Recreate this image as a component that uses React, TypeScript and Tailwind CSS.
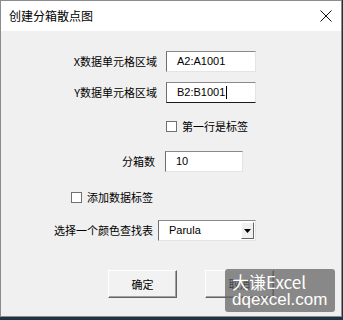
const cjk = { fontFamily: '"Noto Sans CJK SC", "Liberation Sans", sans-serif' };

const Checkbox = () => (
  <span className="w-[11px] h-[11px] bg-white border border-[#707070] shrink-0" />
);

const Field = ({ value, width, caret }: { value: string; width: string; caret?: boolean }) => (
  <div
    className={`${width} h-[21px] bg-white border-t border-l border-t-[#8a8a8a] border-l-[#6e6e6e] border-r border-b border-r-[#e4e4e4] ${
      caret ? "border-b-[#1a1a1a]" : "border-b-[#e4e4e4]"
    } flex items-center pl-[10px] text-[11px] text-black`}
    style={{ fontFamily: '"Liberation Sans", sans-serif' }}
  >
    {value}
    {caret && <span className="w-px h-[13px] bg-black ml-px" />}
  </div>
);

const Button = ({ label }: { label: string }) => (
  <div className="w-[69px] h-[28px] bg-[#f2f2f2] border border-t-white border-l-white border-b-[#646464] border-r-[#646464] shadow-[inset_-1px_-1px_0_#a0a0a0] flex items-center justify-center text-[11px] text-black">
    {label}
  </div>
);

export default function App() {
  return (
    <div className="w-[343px] h-[320px] bg-[#1d3440] relative overflow-hidden" style={cjk}>
      <div className="w-[342px] h-[317px] bg-[#f0f0f0] border border-[#8c8c8c] flex flex-col">
        {/* title bar */}
        <div className="h-[30px] bg-white flex items-center justify-between pl-[8px] pr-[9px]">
          <span className="text-[12px] text-black">创建分箱散点图</span>
          <svg width="12" height="12" viewBox="0 0 12 12">
            <path d="M0.5 0.5 L11.5 11.5 M11.5 0.5 L0.5 11.5" stroke="#111" strokeWidth="1" />
          </svg>
        </div>

        <div className="flex flex-col text-[11px] text-black">
          <div className="flex items-center mt-[20px]">
            <span className="w-[156px] text-right">X数据单元格区域</span>
            <div className="ml-[9px]">
              <Field value="A2:A1001" width="w-[90px]" />
            </div>
          </div>

          <div className="flex items-center mt-[10px]">
            <span className="w-[156px] text-right">Y数据单元格区域</span>
            <div className="ml-[9px]">
              <Field value="B2:B1001" width="w-[90px]" caret />
            </div>
          </div>

          <div className="flex items-center mt-[16px] pl-[165px] gap-[5px] h-[14px]">
            <Checkbox />
            <span>第一行是标签</span>
          </div>

          <div className="flex items-center mt-[18px]">
            <span className="w-[154px] text-right">分箱数</span>
            <div className="ml-[10px]">
              <Field value="10" width="w-[78px]" />
            </div>
          </div>

          <div className="flex items-center mt-[18px] pl-[70px] gap-[5px] h-[14px]">
            <Checkbox />
            <span>添加数据标签</span>
          </div>

          <div className="flex items-center mt-[16px]">
            <span className="w-[152px] text-right">选择一个颜色查找表</span>
            <div className="ml-[5px] w-[98px] h-[21px] bg-white border border-t-[#8a8a8a] border-l-[#6e6e6e] border-r-[#e4e4e4] border-b-[#e4e4e4] flex items-center justify-between pl-[10px] pr-px">
              <span style={{ fontFamily: '"Liberation Sans", sans-serif' }}>Parula</span>
              <div className="w-[13px] h-[17px] bg-[#f0f0f0] border border-t-white border-l-white border-b-[#646464] border-r-[#646464] flex items-center justify-center">
                <svg width="7" height="4" viewBox="0 0 7 4">
                  <path d="M0 0 H7 L3.5 4 Z" fill="#000" />
                </svg>
              </div>
            </div>
          </div>

          <div className="flex mt-[29px] pl-[107px] gap-[28px]">
            <Button label="确定" />
            <Button label="取消" />
          </div>
        </div>
      </div>

      {/* watermark */}
      <div className="absolute left-[225px] top-[269px] w-[110px] h-[43px] rounded-[3px] bg-[rgba(95,95,95,0.72)] flex flex-col justify-center pl-[7px] text-white text-[17px] leading-[18px]">
        <span>大谦Excel</span>
        <span style={{ fontFamily: '"Liberation Sans", sans-serif' }}>dqexcel.com</span>
      </div>
    </div>
  );
}
